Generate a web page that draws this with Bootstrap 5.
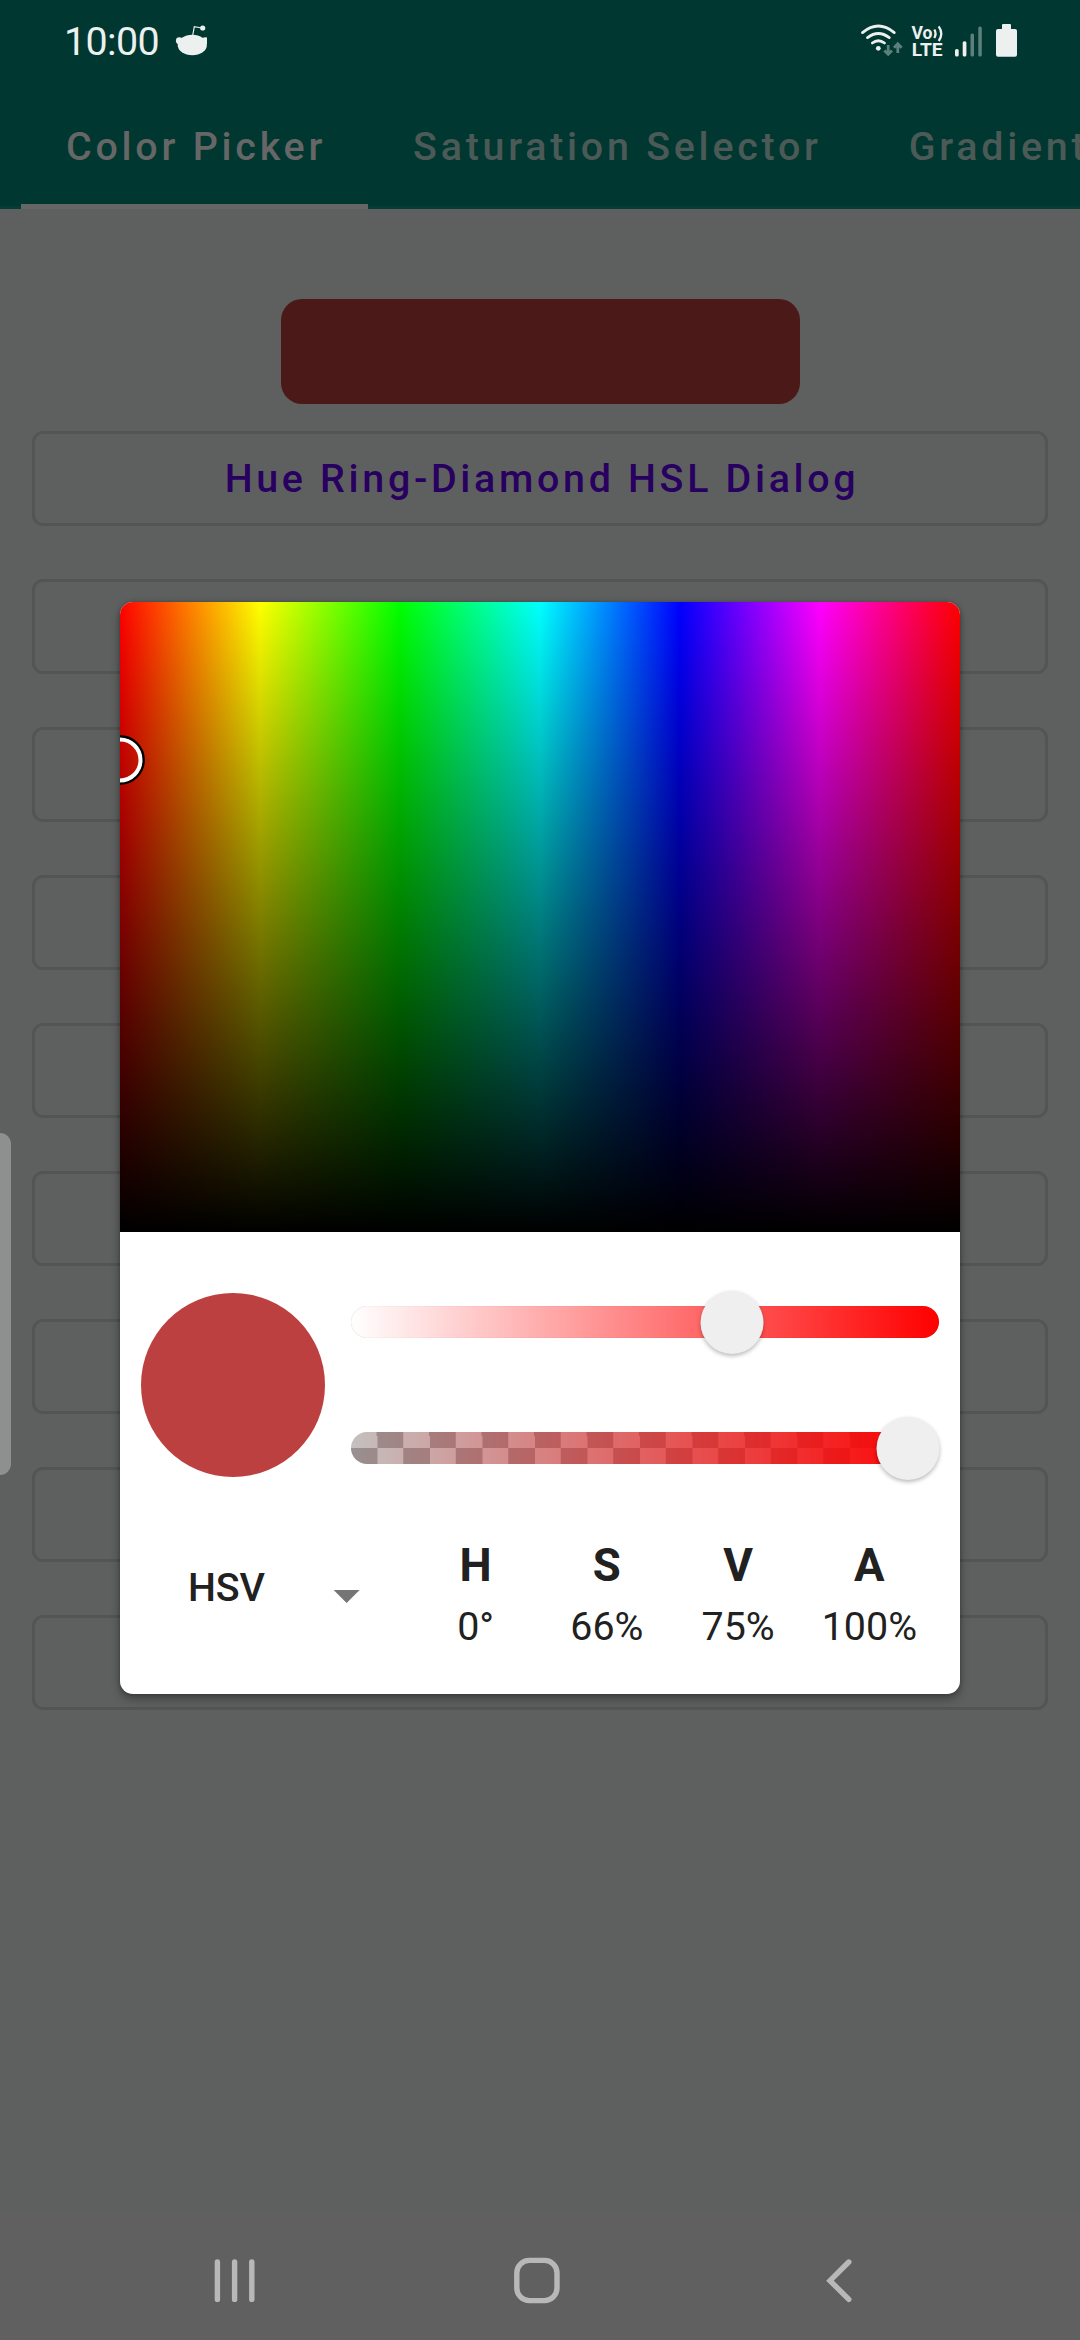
<!DOCTYPE html>
<html lang="en">
<head>
<meta charset="utf-8">
<meta name="viewport" content="width=device-width, initial-scale=1">
<title>Color Picker</title>
<link href="https://cdn.jsdelivr.net/npm/bootstrap@5.3.0/dist/css/bootstrap.min.css" rel="stylesheet">
<style>
  body { font-family: Roboto, "Liberation Sans", sans-serif; background: #5e605f; font-size: 39.4px; line-height: 1; }
  .screen { width: 1080px; height: 2340px; }
  .app-head { height: 209px; background: linear-gradient(#003731 206px, #0a3c37 206px); }
  .status-bar { height: 84px; color: #ecf0ef; padding: 0 62px 0 64px; }
  .clock { width: 94px; letter-spacing: -.6px; line-height: 84px; }
  .reddit-icon { margin-left: 17px; }
  .tab-strip { height: 125px; padding-left: 21px; }
  .tab-strip .nav-link { height: 125px; padding: 43px 42px 0 45px; color: #4c5a57; font-weight: 500; letter-spacing: 3.75px; border-bottom: 5px solid transparent; border-radius: 0; }
  .tab-strip .nav-link.active { color: #666; border-bottom-color: #666; }
  .color-swatch { width: 519px; height: 105px; border-radius: 21px; background: #4c1919; margin: 90px 0 27px 281px; }
  .btn-stack { gap: 53px; padding: 0 32px; }
  .btn-outline { height: 95px; border: 3px solid #535555; border-radius: 11px; padding: 0; font-size: 39.4px; font-weight: 500; letter-spacing: 3.68px; text-indent: 4px; color: #280060; line-height: 1; }
  .edge-handle { left: 0; top: 1133px; width: 11px; height: 342px; border-radius: 0 11px 11px 0; background: #8e908f; }
  .sys-nav { height: 127px; background: #606060; }
  .picker { left: 120px; top: 602px; width: 840px; height: 1092px; border-radius: 13px; color: #212121; box-shadow: 0 5px 10px rgba(0,0,0,.32), 0 0 4px rgba(0,0,0,.25); }
  .hue-field { height: 630px; background: linear-gradient(to bottom, transparent, #000), linear-gradient(to right, #f00, #ff0, #0f0, #0ff, #00f, #f0f, #f00); }
  .ring { left: -25px; top: 133px; }
  .slider-row { padding: 61px 21px 0; height: 245px; }
  .preview { width: 184px; height: 184px; background: #bd4040; }
  .sliders { width: 588px; margin-left: 26px; padding-top: 13px; gap: 94px; }
  .track { height: 32px; border-radius: 16px; }
  .sat { background: linear-gradient(to right, #fff, #f00); box-shadow: inset 0 0 1px rgba(0,0,0,.25); }
  .alpha { background: linear-gradient(to right, rgba(255,0,0,.01), #f00), repeating-conic-gradient(#979292 0 25%, #c4c2c2 0 50%) -.25px 0 / 52.5px 32px; }
  .thumb { width: 63px; height: 63px; top: -15px; background: #efefef; transform: translateX(-50%); box-shadow: 0 2px 4px rgba(0,0,0,.28); }
  .mode { width: 290px; padding: 91px 0 0 68px; font-weight: 500; letter-spacing: -.2px; }
  .caret { margin: 22px 0 0 69px; width: 26px; height: 13px; background: #757575; clip-path: polygon(0 0, 100% 0, 50% 100%); }
  .chan { width: 131.25px; padding-top: 66px; }
  .chan-name { font-size: 45.5px; font-weight: 700; }
  .chan-val { margin-top: 18px; }
</style>
</head>
<body>
<div class="screen position-relative overflow-hidden d-flex flex-column">
  <header class="app-head flex-shrink-0 overflow-hidden">
    <div class="status-bar d-flex align-items-start">
      <div class="clock">10:00</div>
      <svg class="reddit-icon" width="32" height="84" viewBox="174 0 32 84" fill="#ecf0ef">
        <ellipse cx="191.3" cy="45" rx="14.6" ry="10.3"/><circle cx="178.3" cy="40.7" r="3.4"/><circle cx="204.3" cy="40.7" r="3.4"/>
        <path d="M191.6 36L193.3 26.6L201 28" fill="none" stroke="#ecf0ef" stroke-width="1.2"/><circle cx="201.7" cy="28" r="2.6"/>
      </svg>
      <svg class="ms-auto" width="160" height="84" viewBox="858 0 160 84" fill="#ecf0ef">
        <g fill="none" stroke="#ecf0ef" stroke-width="2.8" stroke-linecap="round">
          <path d="M862.5 32.6Q878.3 19.4 894.3 32.6M867.5 37.6Q878.3 29.4 889.3 37.6M872.3 43Q878.3 38.4 884.5 43"/>
        </g>
        <circle cx="878.3" cy="48.3" r="2.4"/>
        <g fill="none" stroke="#5c807b" stroke-width="2.8"><path d="M888.2 45V54M884.4 50.4L888.2 54.3L892 50.4M897.8 53V44M894 47.8L897.8 43.8L901.6 47.8"/></g>
        <g font-family="Roboto, sans-serif" font-weight="700" font-size="17.6"><text x="911.5" y="39" textLength="21" lengthAdjust="spacingAndGlyphs">Vo</text><text x="911.7" y="56" font-size="18" textLength="31" lengthAdjust="spacingAndGlyphs">LTE</text></g>
        <path d="M934.3 29.5Q936.8 33.5 934.3 38M938.7 26.3Q943.8 33.5 938.7 41" fill="none" stroke="#ecf0ef" stroke-width="2.3"/>
        <rect x="955" y="49" width="3.7" height="7.5" rx="1.6"/><rect x="962.7" y="41.2" width="3.7" height="15.3" rx="1.6"/>
        <rect x="970.5" y="33.5" width="3.5" height="23" rx="1.6" fill="#5c807b"/><rect x="978.3" y="26.5" width="3.5" height="30" rx="1.6" fill="#5c807b"/>
        <rect x="996" y="29" width="21" height="27.7" rx="2"/><rect x="1002" y="24" width="9" height="7" rx="1"/>
      </svg>
    </div>
    <nav class="nav flex-nowrap text-nowrap tab-strip">
      <a class="nav-link active">Color Picker</a>
      <a class="nav-link">Saturation Selector</a>
      <a class="nav-link">Gradient</a>
    </nav>
  </header>

  <main class="flex-grow-1">
    <div class="color-swatch"></div>
    <div class="btn-stack d-grid">
      <button class="btn btn-outline">Hue Ring-Diamond HSL Dialog</button>
      <button class="btn btn-outline"></button>
      <button class="btn btn-outline"></button>
      <button class="btn btn-outline"></button>
      <button class="btn btn-outline"></button>
      <button class="btn btn-outline"></button>
      <button class="btn btn-outline"></button>
      <button class="btn btn-outline"></button>
      <button class="btn btn-outline"></button>
    </div>
  </main>

  <footer class="sys-nav flex-shrink-0">
    <svg class="d-block" width="1080" height="127" viewBox="0 2213 1080 127" fill="none" stroke="#b8b8b8" stroke-width="5.4" stroke-linecap="round">
      <path d="M217.4 2262V2299.4M234.6 2262V2299.4M251.8 2262V2299.4"/>
      <rect x="516.8" y="2260.4" width="40.2" height="40.2" rx="12.5"/>
      <path d="M848.8 2262L830 2280.7L848.8 2299.4"/>
    </svg>
  </footer>

  <div class="edge-handle position-absolute"></div>

  <section class="picker position-absolute bg-white overflow-hidden">
    <div class="hue-field position-relative">
      <svg class="ring position-absolute" width="50" height="50" viewBox="0 0 50 50" fill="none">
        <circle cx="25" cy="25" r="23.4" stroke="#000" stroke-width="3"/><circle cx="25" cy="25" r="20.5" stroke="#fff" stroke-width="4"/>
      </svg>
    </div>
    <div class="slider-row d-flex">
      <div class="preview rounded-circle flex-shrink-0"></div>
      <div class="sliders d-flex flex-column flex-shrink-0">
        <div class="track sat position-relative"><div class="thumb rounded-circle position-absolute" style="left:380.7px"></div></div>
        <div class="track alpha position-relative"><div class="thumb rounded-circle position-absolute" style="left:556.6px"></div></div>
      </div>
    </div>
    <div class="d-flex">
      <div class="mode d-flex flex-shrink-0"><span>HSV</span><span class="caret"></span></div>
      <div class="chan text-center"><div class="chan-name">H</div><div class="chan-val">0°</div></div>
      <div class="chan text-center"><div class="chan-name">S</div><div class="chan-val">66%</div></div>
      <div class="chan text-center"><div class="chan-name">V</div><div class="chan-val">75%</div></div>
      <div class="chan text-center"><div class="chan-name">A</div><div class="chan-val">100%</div></div>
    </div>
  </section>
</div>
<script src="https://cdn.jsdelivr.net/npm/bootstrap@5.3.0/dist/js/bootstrap.bundle.min.js"></script>
</body>
</html>
